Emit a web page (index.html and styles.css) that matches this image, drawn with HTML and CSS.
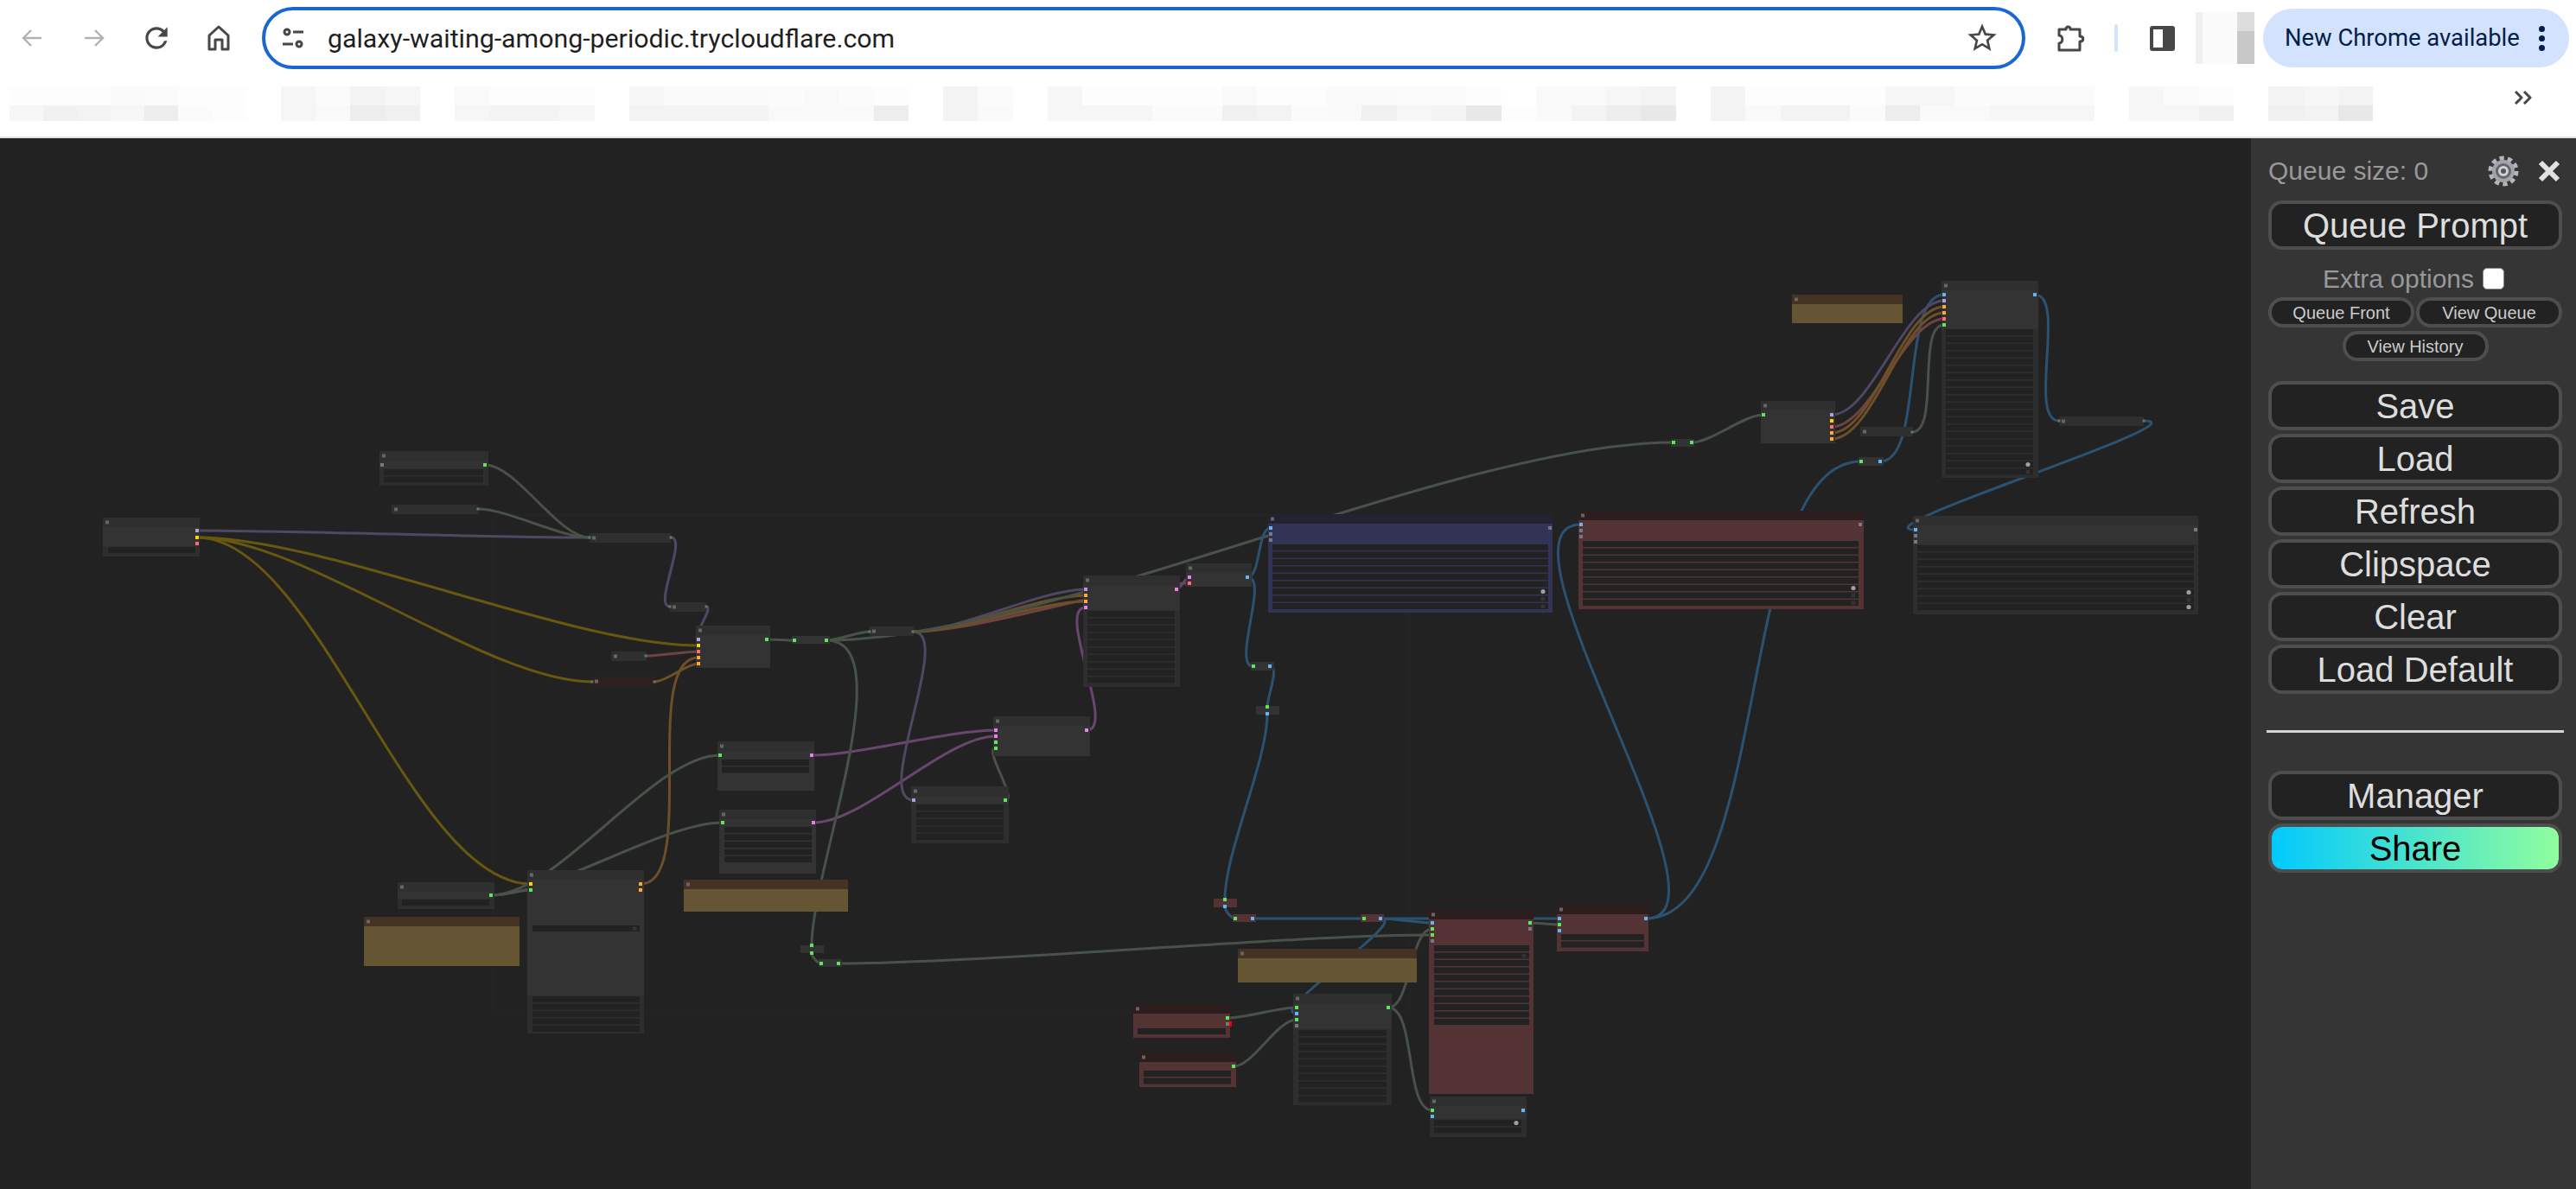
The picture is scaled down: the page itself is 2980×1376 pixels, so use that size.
FILE: index.html
```html
<!DOCTYPE html>
<html lang="en">

<head>
    <meta charset="UTF-8">
    <title>ComfyUI</title>
    <link rel="stylesheet" href="styles.css">
</head>

<body>
    <div class="toolbar">
        <div class="nav-btn">
            <svg width="26" height="26" viewBox="0 0 26 26" class="icon-off"><path d="M24 13H3M12 4l-9 9 9 9" /></svg>
        </div>
        <div class="nav-btn">
            <svg width="26" height="26" viewBox="0 0 26 26" class="icon-off"><path d="M2 13h21M14 4l9 9-9 9" /></svg>
        </div>
        <div class="nav-btn">
            <svg width="38" height="38" viewBox="0 0 24 24" class="icon-fill"><path d="M17.65 6.35A7.958 7.958 0 0012 4c-4.42 0-7.99 3.58-7.99 8s3.57 8 7.99 8c3.73 0 6.84-2.55 7.73-6h-2.08A5.99 5.99 0 0112 18c-3.31 0-6-2.69-6-6s2.69-6 6-6c1.66 0 3.14.69 4.22 1.78L13 11h7V4l-2.35 2.35z" /></svg>
        </div>
        <div class="nav-btn">
            <svg width="28" height="30" viewBox="0 0 28 30" class="icon-line"><path d="M14 2L3 12v16h7V17h8v11h7V12z" /></svg>
        </div>

        <div class="omnibox">
            <svg width="26" height="24" viewBox="0 0 26 24" class="icon-tune">
                <circle cx="6" cy="5" r="3" />
                <path d="M13 5h12M1 19h12" />
                <circle cx="20" cy="19" r="3" />
            </svg>
            <span class="url">galaxy-waiting-among-periodic.trycloudflare.com</span>
            <svg width="40" height="40" viewBox="0 0 24 24" class="icon-fill star"><path d="M22 9.24l-7.19-.62L12 2 9.19 8.63 2 9.24l5.46 4.73L5.82 21 12 17.27 18.18 21l-1.63-7.03L22 9.24zM12 15.4l-3.76 2.27 1-4.28-3.32-2.88 4.38-.38L12 6.1l1.71 4.04 4.38.38-3.32 2.88 1 4.28L12 15.4z" /></svg>
        </div>

        <svg width="34" height="32" viewBox="0 0 34 32" class="icon-line ext"><path d="M3 6h8c0-4 5-4 5 0h11v8c5 0 5 6 0 6v10H3v-8c5 0 5-9 0-9z" /></svg>
        <div class="tool-divider"></div>
        <div class="side-panel"><span></span></div>
        <div class="avatar"></div>
        <div class="update-pill">
            <span>New Chrome available</span>
            <div class="pill-dots"><i></i><i></i><i></i></div>
        </div>
    </div>

    <div class="bookmarks">
        <div id="bookmarkCells" class="bookmark-cells"></div>
        <svg width="22" height="16" viewBox="0 0 22 16" class="icon-line more"><path d="M2 1l7 7-7 7M12 1l7 7-7 7" /></svg>
    </div>

    <div class="app">
        <div class="canvas">
            <svg id="graph" width="2604" height="1216" viewBox="0 160 2604 1216"></svg>
        </div>

        <div class="menu">
            <div class="queue-row">
                <span class="queue-size">Queue size: 0</span>
                <div class="queue-icons">
                    <svg width="36" height="36" viewBox="0 0 36 36">
                        <circle cx="18" cy="18" r="15" class="gear-teeth" />
                        <circle cx="18" cy="18" r="13" fill="#a2a4a9" />
                        <circle cx="18" cy="18" r="9" fill="#66676c" />
                        <circle cx="18" cy="18" r="6" fill="#cfd0d4" />
                        <circle cx="18" cy="18" r="3" fill="#55565b" />
                    </svg>
                    <svg width="26" height="26" viewBox="0 0 26 26" class="close"><path d="M3 3l20 20M23 3L3 23" /></svg>
                </div>
            </div>

            <button class="btn">Queue Prompt</button>

            <label class="extra-row">Extra options <span class="check"></span></label>

            <div class="small-row">
                <button class="btn btn-small">Queue Front</button>
                <button class="btn btn-small">View Queue</button>
            </div>
            <div class="small-row small-center">
                <button class="btn btn-small">View History</button>
            </div>

            <div class="btn-stack">
                <button class="btn">Save</button>
                <button class="btn">Load</button>
                <button class="btn">Refresh</button>
                <button class="btn">Clipspace</button>
                <button class="btn">Clear</button>
                <button class="btn">Load Default</button>
            </div>

            <div class="menu-line"></div>

            <div class="btn-stack manager-stack">
                <button class="btn">Manager</button>
                <button class="btn btn-share">Share</button>
            </div>
        </div>
    </div>

    <script src="graph.js"></script>
</body>

</html>
```
FILE: styles.css
```css
* {
    margin: 0;
    padding: 0;
    box-sizing: border-box;
}

body {
    font-family: 'Liberation Sans', sans-serif;
    background: #ffffff;
    height: 100vh;
    overflow: hidden;
    display: flex;
    flex-direction: column;
}

/* browser chrome */
.toolbar {
    height: 88px;
    display: flex;
    align-items: center;
    padding: 0 8px 0 1px;
    flex-shrink: 0;
}

.nav-btn {
    width: 72px;
    display: flex;
    justify-content: center;
}

.icon-off path {
    fill: none;
    stroke: #b2b2b2;
    stroke-width: 2.4;
}

.icon-fill path {
    fill: #474747;
}

.icon-line path {
    fill: none;
    stroke: #474747;
    stroke-width: 3;
    stroke-linejoin: round;
}

.omnibox {
    width: 2040px;
    height: 72px;
    margin-left: 14px;
    border: 4px solid #1a66d2;
    border-radius: 36px;
    display: flex;
    align-items: center;
    padding: 0 26px 0 19px;
}

.icon-tune circle,
.icon-tune path {
    fill: none;
    stroke: #474747;
    stroke-width: 3;
}

.url {
    margin-left: 27px;
    flex: 1;
    font-family: Roboto, sans-serif;
    font-size: 30.3px;
    color: #1f1f1f;
}

.ext {
    margin-left: 36px;
}

.tool-divider {
    width: 4px;
    height: 32px;
    margin-left: 33px;
    border-radius: 2px;
    background: #d3e3fd;
}

.side-panel {
    width: 29px;
    height: 29px;
    margin-left: 37px;
    border: 4px solid #474747;
    border-radius: 3px;
    display: flex;
    justify-content: flex-end;
}

.side-panel span {
    width: 10px;
    background: #474747;
}

.avatar {
    width: 68px;
    height: 60px;
    margin-left: 24px;
    background:
        linear-gradient(90deg, #f0f0f0 8px, #fafafa 8px 48px, transparent 48px),
        linear-gradient(#dddddd 22px, #c8c8c8 22px);
}

.update-pill {
    width: 354px;
    height: 68px;
    margin-left: 10px;
    padding: 0 25px;
    border-radius: 34px;
    background: #d3e3fd;
    color: #041e49;
    font-family: Roboto, sans-serif;
    font-size: 27.4px;
    display: flex;
    align-items: center;
    justify-content: space-between;
}

.pill-dots {
    display: flex;
    flex-direction: column;
    gap: 4px;
    margin-right: 3px;
}

.pill-dots i {
    width: 7px;
    height: 7px;
    border-radius: 50%;
    background: #041e49;
}

.bookmarks {
    height: 72px;
    padding: 12px 50px 0 11px;
    border-bottom: 2px solid #e1e1e1;
    display: flex;
    justify-content: space-between;
    flex-shrink: 0;
}

.bookmark-cells {
    display: flex;
    gap: 40px;
    height: 40px;
}

.bookmark-group {
    display: grid;
    grid-auto-flow: column;
    grid-auto-columns: 40.4px;
    grid-template-rows: 22px 18px;
}

.bookmark-group:first-child {
    grid-auto-columns: 39.1px;
}

.s0 { background: #ffffff; }
.s1 { background: #fdfdfd; }
.s2 { background: #fbfbfb; }
.s3 { background: #f9f9f9; }
.s4 { background: #f6f6f6; }
.s5 { background: #f3f3f3; }
.s6 { background: #f0f0f0; }
.s7 { background: #ededed; }
.s8 { background: #e8e8e8; }

.more {
    margin-top: 5px;
}

/* app */
.app {
    flex: 1;
    display: flex;
    min-height: 0;
}

.canvas {
    flex: 1;
    background: #222222;
    overflow: hidden;
}

#graph {
    display: block;
    filter: blur(0.5px);
}

.wire {
    fill: none;
    stroke-width: 3;
    stroke-linecap: round;
}

.menu {
    width: 376px;
    padding: 20px 16px 0 20px;
    background: #353535;
    display: flex;
    flex-direction: column;
    flex-shrink: 0;
}

.queue-row {
    height: 36px;
    margin-bottom: 16px;
    display: flex;
    align-items: center;
    justify-content: space-between;
}

.queue-size {
    font-size: 30px;
    color: #999999;
}

.queue-icons {
    display: flex;
    align-items: center;
    gap: 22px;
    margin-right: 2px;
}

.gear-teeth {
    fill: none;
    stroke: #b4b6bb;
    stroke-width: 5;
    stroke-dasharray: 5.2 4.2;
}

.close path {
    fill: none;
    stroke: #e2e2e2;
    stroke-width: 6;
}

.btn {
    width: 100%;
    height: 57px;
    flex-shrink: 0;
    border: 4px solid #4e4e4e;
    border-radius: 16px;
    background: #222222;
    color: #dddddd;
    font-family: 'Liberation Sans', sans-serif;
    font-size: 40px;
    line-height: 1;
}

.extra-row {
    height: 36px;
    margin-top: 16px;
    padding-right: 4px;
    font-size: 30px;
    color: #999999;
    display: flex;
    align-items: center;
    justify-content: center;
    gap: 10px;
}

.check {
    width: 25px;
    height: 25px;
    margin-top: -2px;
    border: 1px solid #8a8a8a;
    border-radius: 5px;
    background: #ffffff;
}

.small-row {
    margin-top: 3px;
    display: flex;
    gap: 2px;
}

.small-center {
    margin-top: 4px;
    justify-content: center;
}

.btn-small {
    width: 169px;
    height: 35px;
    border-radius: 17px;
    font-size: 20px;
    color: #cccccc;
}

.btn-stack {
    margin-top: 23px;
    display: flex;
    flex-direction: column;
    gap: 4px;
}

.menu-line {
    height: 3px;
    margin: 42px -2px 0;
    flex-shrink: 0;
    background: #d4d4d4;
}

.manager-stack {
    margin-top: 44px;
}

.btn-share {
    background: linear-gradient(90deg, #00c9ff 0%, #92fe9d 100%);
    background-origin: border-box;
    background-clip: padding-box;
    color: #000000;
}
```
FILE: graph.js
```js
// draws the blurred bookmark strip and the node graph

const bookmarkGroups = [
    ['1113211', '4654721'],
    ['4254', '4376'],
    ['3111', '4554'],
    ['43332321', '55553337'],
    ['52', '53'],
    ['411113113322103345', '444226523645813578'],
    ['51111442222', '53552733444'],
    ['421', '446'],
    ['545', '658']
];

const cells = document.getElementById('bookmarkCells');
bookmarkGroups.forEach(function (group) {
    const el = document.createElement('div');
    el.className = 'bookmark-group';
    for (let i = 0; i < group[0].length; i++) {
        group.forEach(function (row) {
            const cell = document.createElement('div');
            cell.className = 's' + row[i];
            el.appendChild(cell);
        });
    }
    cells.appendChild(el);
});

// port and wire colours per type
const types = {
    purple: ['#b39ddb', '#504763'],
    yellow: ['#ffd500', '#675810'],
    red: ['#ff6e6e', '#6e4343'],
    orange: ['#ffa931', '#6e4f28'],
    green: ['#5ce65c', '#485248'],
    pink: ['#f07cf0', '#69466f'],
    blue: ['#64b5f6', '#2b5270'],
    gray: ['#77778a', '#485248'],
    dim: ['#5f7a5f', '#485248']
};

const themes = {
    plain: ['#2f2f2f', '#333333'],
    red: ['#2c1e1e', '#533333'],
    blue: ['#222233', '#333355'],
    note: ['#443322', '#665533'],
    darkred: ['#2f1f1f', '#2f1f1f']
};

// x, y, w, h, theme, opts { collapsed, bare, rows: [x, y, w, n, dots], ports }
const nodes = [
    [119, 599, 112, 45, 'plain', { rows: [125, 633, 101, 1], ports: [[228, 614, 'purple'], [228, 622, 'yellow'], [228, 629, 'red']] }],
    [439, 522, 126, 40, 'plain', { rows: [444, 543, 115, 2], ports: [[442, 538, 'gray'], [561, 538, 'green']] }],
    [453, 584, 100, 11, 'plain', { collapsed: true, ports: [[553, 589, 'dim']] }],
    [682, 617, 94, 11, 'plain', { collapsed: true, ports: [[682, 622, 'dim'], [776, 622, 'dim']] }],
    [775, 697, 42, 11, 'plain', { collapsed: true, ports: [[775, 702, 'dim'], [817, 702, 'dim']] }],
    [805, 724, 86, 49, 'plain', { ports: [[808, 740, 'purple'], [808, 747, 'yellow'], [808, 754, 'red'], [808, 761, 'orange'], [808, 768, 'orange'], [887, 740, 'green']] }],
    [707, 754, 41, 11, 'plain', { collapsed: true, ports: [[747, 759, 'dim']] }],
    [685, 783, 73, 11, 'darkred', { collapsed: true, ports: [[685, 789, 'dim'], [757, 789, 'dim']] }],
    [916, 736, 44, 9, 'plain', { bare: true, ports: [[919, 741, 'green'], [956, 741, 'green']] }],
    [1006, 725, 51, 11, 'plain', { collapsed: true, ports: [[1006, 731, 'dim'], [1056, 731, 'dim']] }],
    [610, 1007, 135, 189, 'plain', {
        rows: [616, 1153, 124, 5],
        extra: [616, 1071, 124, 0],
        ports: [[614, 1023, 'yellow'], [614, 1030, 'green'], [741, 1023, 'orange'], [741, 1030, 'orange']]
    }],
    [460, 1021, 112, 31, 'plain', { rows: [465, 1041, 101, 1], ports: [[568, 1036, 'green']] }],
    [421, 1061, 180, 57, 'note', {}],
    [830, 858, 112, 57, 'plain', { rows: [835, 879, 101, 2], ports: [[833, 874, 'green'], [939, 874, 'pink']] }],
    [832, 937, 112, 74, 'plain', { rows: [838, 957, 101, 5], ports: [[836, 952, 'green'], [941, 952, 'pink']] }],
    [791, 1018, 190, 37, 'note', {}],
    [926, 1094, 27, 9, 'plain', { bare: true, ports: [[939, 1094, 'green'], [939, 1103, 'green']] }],
    [947, 1110, 27, 9, 'plain', { bare: true, ports: [[950, 1115, 'green'], [970, 1115, 'green']] }],
    [1054, 910, 113, 66, 'plain', { rows: [1060, 931, 101, 5], ports: [[1057, 926, 'purple'], [1163, 926, 'green']] }],
    [1149, 829, 112, 46, 'plain', { ports: [[1152, 845, 'pink'], [1152, 852, 'pink'], [1152, 859, 'green'], [1152, 866, 'green'], [1257, 845, 'pink']] }],
    [1253, 666, 112, 129, 'plain', {
        rows: [1258, 707, 101, 10],
        ports: [[1256, 682, 'purple'], [1256, 689, 'orange'], [1256, 696, 'orange'], [1256, 703, 'pink'], [1361, 682, 'pink']]
    }],
    [1372, 652, 76, 27, 'plain', { ports: [[1376, 668, 'pink'], [1376, 675, 'red'], [1443, 668, 'blue']] }],
    [1467, 595, 329, 114, 'blue', {
        rows: [1472, 630, 319, 9, [[6, 1], [7, 0], [8, 0]]],
        ports: [[1470, 611, 'blue'], [1470, 618, 'gray'], [1470, 625, 'gray'], [1793, 611, 'gray']]
    }],
    [1447, 766, 27, 10, 'plain', { bare: true, ports: [[1450, 771, 'green'], [1469, 771, 'blue']] }],
    [1453, 817, 27, 10, 'plain', { bare: true, ports: [[1466, 818, 'green'], [1466, 826, 'blue']] }],
    [1826, 591, 330, 114, 'red', {
        rows: [1831, 626, 319, 9, [[6, 1], [7, 0], [8, 0]]],
        ports: [[1829, 607, 'blue'], [1829, 614, 'gray'], [1829, 621, 'gray'], [2152, 607, 'gray']]
    }],
    [2213, 597, 330, 114, 'plain', {
        rows: [2218, 631, 320, 9, [[6, 1], [7, 0], [8, 1]]],
        ports: [[2216, 613, 'blue'], [2216, 620, 'gray'], [2216, 627, 'gray'], [2540, 613, 'gray']]
    }],
    [2037, 464, 86, 49, 'plain', { ports: [[2040, 480, 'green'], [2119, 480, 'purple'], [2119, 487, 'yellow'], [2119, 494, 'red'], [2119, 501, 'orange'], [2119, 508, 'orange']] }],
    [2246, 325, 112, 228, 'plain', {
        rows: [2251, 381, 101, 20, [[18, 1], [19, 0]]],
        ports: [[2249, 341, 'blue'], [2249, 348, 'purple'], [2249, 355, 'orange'], [2249, 362, 'orange'], [2249, 369, 'red'], [2249, 376, 'green'], [2354, 341, 'blue']]
    }],
    [2073, 341, 128, 33, 'note', {}],
    [2152, 494, 61, 11, 'plain', { collapsed: true, ports: [[2212, 500, 'dim']] }],
    [2150, 529, 29, 10, 'plain', { bare: true, ports: [[2153, 534, 'green'], [2175, 534, 'blue']] }],
    [2382, 482, 98, 11, 'plain', { collapsed: true, ports: [[2382, 487, 'dim'], [2480, 487, 'dim']] }],
    [1933, 508, 27, 9, 'plain', { bare: true, ports: [[1936, 512, 'green'], [1957, 512, 'green']] }],
    [1404, 1040, 27, 10, 'red', { bare: true, ports: [[1417, 1041, 'green'], [1417, 1049, 'blue']] }],
    [1426, 1058, 27, 9, 'red', { bare: true, ports: [[1429, 1063, 'green'], [1449, 1063, 'blue']] }],
    [1574, 1058, 27, 9, 'red', { bare: true, ports: [[1578, 1063, 'green'], [1597, 1063, 'blue']] }],
    [1653, 1053, 121, 213, 'red', {
        rows: [1659, 1094, 110, 11, [[1, 0]]],
        ports: [[1657, 1068, 'blue'], [1657, 1075, 'green'], [1657, 1082, 'green'], [1657, 1089, 'gray'], [1770, 1068, 'green'], [1770, 1075, 'gray']]
    }],
    [1801, 1047, 106, 54, 'red', {
        rows: [1806, 1081, 96, 2],
        ports: [[1804, 1063, 'blue'], [1804, 1070, 'green'], [1804, 1077, 'blue'], [1904, 1063, 'blue']]
    }],
    [1432, 1098, 207, 39, 'note', {}],
    [1496, 1150, 114, 129, 'plain', {
        rows: [1502, 1192, 102, 10],
        ports: [[1500, 1166, 'green'], [1500, 1173, 'blue'], [1500, 1180, 'green'], [1500, 1187, 'gray'], [1606, 1166, 'green']]
    }],
    [1311, 1162, 112, 39, 'red', { rows: [1316, 1190, 102, 1], ports: [[1420, 1178, 'green'], [1420, 1185, 'gray']] }],
    [1318, 1218, 112, 40, 'red', { rows: [1323, 1239, 101, 2], ports: [[1427, 1234, 'green']] }],
    [1654, 1269, 112, 47, 'plain', {
        rows: [1659, 1296, 101, 2, [[0, 1]]],
        ports: [[1657, 1285, 'green'], [1657, 1292, 'blue'], [1762, 1285, 'blue']]
    }]
];

// from x, y, to x, y, type, and which ends leave vertically (reroutes stacked top to bottom)
const links = [
    [228, 614, 682, 622, 'purple'],
    [228, 622, 808, 747, 'yellow'],
    [228, 622, 685, 789, 'yellow'],
    [228, 622, 614, 1023, 'yellow'],
    [561, 538, 682, 622, 'green'],
    [553, 589, 682, 622, 'green'],
    [776, 622, 775, 702, 'purple'],
    [817, 702, 808, 740, 'purple'],
    [747, 759, 808, 754, 'red'],
    [757, 789, 808, 768, 'orange'],
    [741, 1023, 808, 761, 'orange'],
    [568, 1036, 614, 1030, 'green'],
    [568, 1036, 833, 874, 'green'],
    [568, 1036, 836, 952, 'green'],
    [939, 874, 1152, 845, 'pink'],
    [941, 952, 1152, 852, 'pink'],
    [1056, 731, 1057, 926, 'purple'],
    [1163, 926, 1152, 866, 'green'],
    [1257, 845, 1256, 703, 'pink'],
    [1056, 731, 1256, 682, 'purple'],
    [1056, 731, 1376, 675, 'red'],
    [1056, 731, 1256, 689, 'orange'],
    [1056, 731, 1256, 696, 'orange'],
    [1361, 682, 1376, 668, 'pink'],
    [887, 740, 919, 741, 'green'],
    [956, 741, 1006, 731, 'green'],
    [956, 741, 1936, 512, 'green'],
    [956, 741, 939, 1094, 'green', 'in'],
    [939, 1103, 950, 1115, 'green', 'out'],
    [970, 1115, 1657, 1082, 'green'],
    [1957, 512, 2040, 480, 'green'],
    [1443, 668, 1470, 611, 'blue'],
    [1443, 668, 1450, 771, 'blue'],
    [1469, 771, 1466, 818, 'blue', 'in'],
    [1466, 826, 1417, 1041, 'blue', 'both'],
    [1417, 1049, 1429, 1063, 'blue', 'out'],
    [1449, 1063, 1578, 1063, 'blue'],
    [1597, 1063, 1657, 1068, 'blue'],
    [1597, 1063, 1804, 1063, 'blue'],
    [1597, 1063, 1500, 1173, 'blue'],
    [1904, 1063, 1829, 607, 'blue'],
    [1904, 1063, 2153, 534, 'blue'],
    [2175, 534, 2249, 341, 'blue'],
    [2354, 341, 2382, 487, 'blue'],
    [2480, 487, 2216, 613, 'blue'],
    [2119, 480, 2249, 348, 'purple'],
    [2119, 494, 2249, 369, 'red'],
    [2119, 501, 2249, 355, 'orange'],
    [2119, 508, 2249, 362, 'orange'],
    [2212, 500, 2249, 376, 'green'],
    [1606, 1166, 1657, 1075, 'green'],
    [1606, 1166, 1657, 1285, 'green'],
    [1420, 1178, 1500, 1166, 'green'],
    [1427, 1234, 1500, 1180, 'green'],
    [1770, 1068, 1804, 1070, 'green']
];

const graph = document.getElementById('graph');

function add(tag, attrs) {
    const el = document.createElementNS('http://www.w3.org/2000/svg', tag);
    Object.keys(attrs).forEach(function (key) {
        el.setAttribute(key, attrs[key]);
    });
    graph.appendChild(el);
    return el;
}

function box(x, y, w, h, fill) {
    add('rect', { x: x, y: y, width: w, height: h, fill: fill });
}

// same curve as the links in the graph editor: handles a quarter of the distance long
function drawLink(l) {
    const d = Math.hypot(l[2] - l[0], l[3] - l[1]) * 0.25;
    const outDown = l[5] === 'out' || l[5] === 'both';
    const inDown = l[5] === 'in' || l[5] === 'both';
    const c1 = outDown ? [l[0], l[1] + d] : [l[0] + d, l[1]];
    const c2 = inDown ? [l[2], l[3] - d] : [l[2] - d, l[3]];
    add('path', {
        class: 'wire',
        stroke: types[l[4]][1],
        d: 'M' + l[0] + ' ' + l[1] + 'C' + c1.join(' ') + ' ' + c2.join(' ') + ' ' + l[2] + ' ' + l[3]
    });
}

function widget(x, y, w, dot) {
    box(x, y, w, 7, '#222222');
    if (dot !== undefined) {
        add('circle', { cx: x + w - 6, cy: y + 3.5, r: 2.6, fill: dot ? '#9aa0aa' : '#333333' });
    }
}

function drawNode(n) {
    const x = n[0], y = n[1], w = n[2], h = n[3], opts = n[5];
    const theme = themes[n[4]];

    box(x, y, w, h, opts.collapsed ? theme[0] : theme[1]);
    if (!opts.bare) {
        box(x, y, w, opts.collapsed ? h : 11, theme[0]);
        box(x + 3, y + 3.5, 4, 4, '#666666');
    }

    if (opts.rows) {
        const r = opts.rows;
        const dots = new Map(r[4] || []);
        const end = r[1] + (r[3] - 1) * 8.5 + 7;
        if (n[4] === 'plain' && end + 5 >= y + h) {
            box(x, r[1] - 1, w, y + h - r[1] + 1, '#2e2e2e');
        }
        for (let i = 0; i < r[3]; i++) {
            widget(r[0], r[1] + i * 8.5, r[2], dots.get(i));
        }
    }
    if (opts.extra) {
        widget(opts.extra[0], opts.extra[1], opts.extra[2], opts.extra[3]);
    }

    (opts.ports || []).forEach(function (p) {
        const size = p[2] === 'dim' ? 3 : 4;
        box(p[0] - size / 2, p[1] - size / 2, size, size, types[p[2]][0]);
    });
}

// faint group frame behind everything
add('rect', { x: 570, y: 596, width: 1060, height: 575, fill: 'none', stroke: '#26262c', 'stroke-width': 1 });

links.forEach(drawLink);
nodes.forEach(drawNode);

// red error marker on the clipped output
box(1422, 1182, 3, 6, '#ee0000');
```
